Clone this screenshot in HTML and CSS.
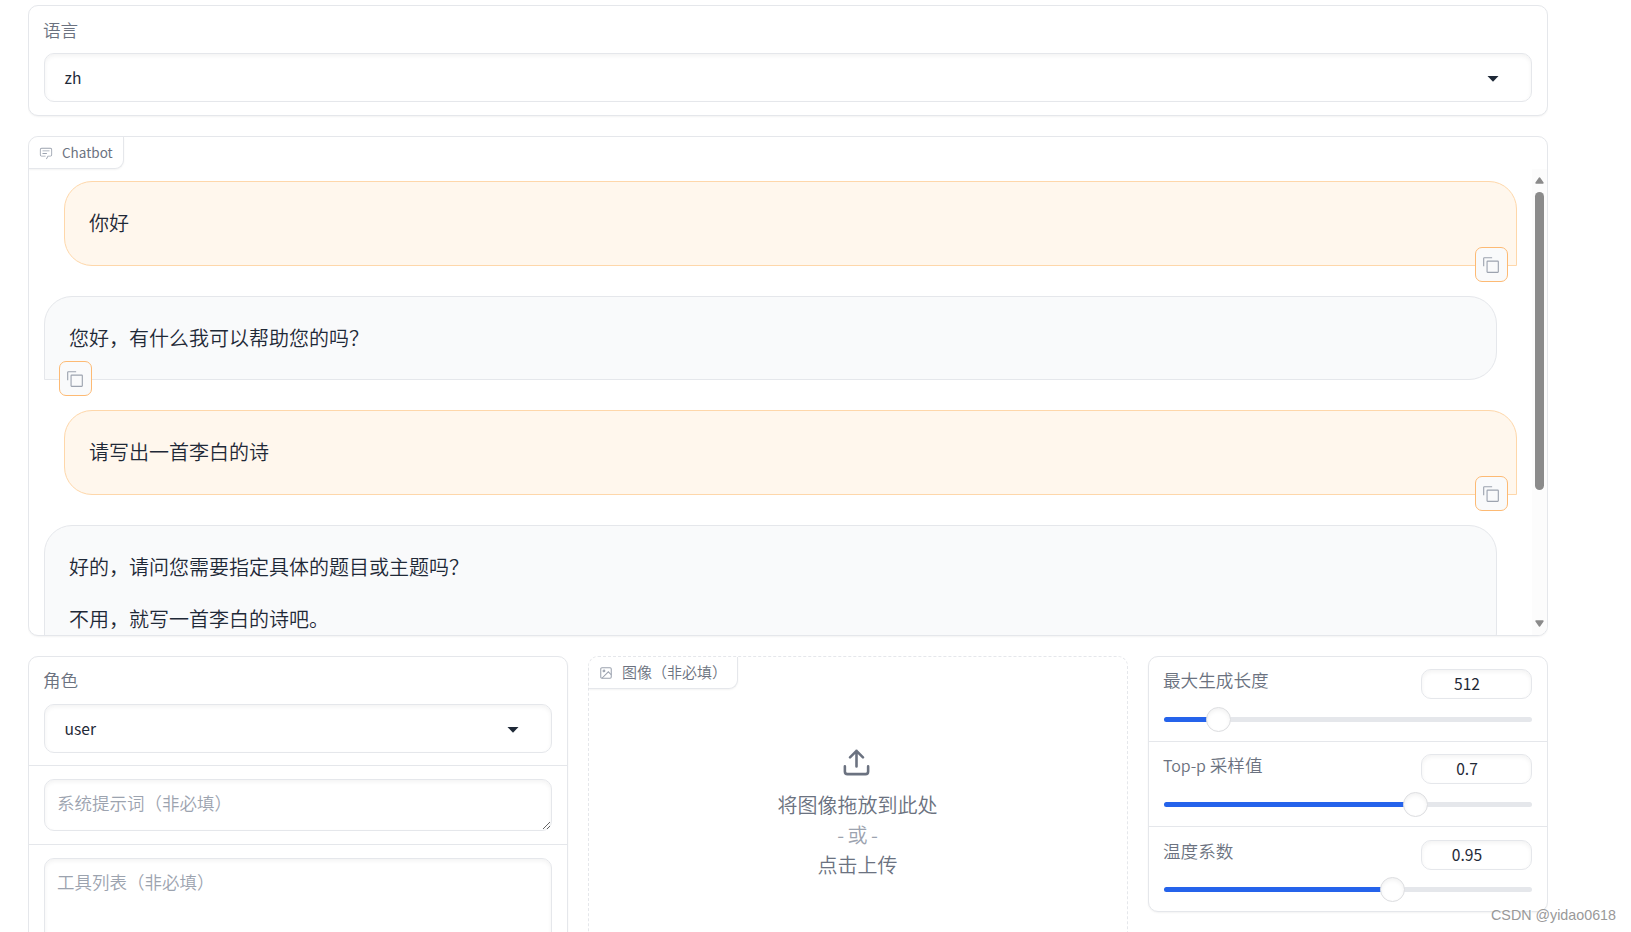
FILE: index.html
```html
<!DOCTYPE html>
<html lang="zh-CN">
<head>
    <meta charset="UTF-8">
    <meta name="viewport" content="width=device-width, initial-scale=1.0">
    <title>Chatbot</title>
    <link rel="stylesheet" href="styles.css">
</head>
<body>
    <div class="container">
        <div class="block lang-block">
            <label class="block-title">语言</label>
            <div class="dropdown">
                <span>zh</span>
                <svg class="arrow" viewBox="0 0 18 18"><path d="M3.5 7h11L9 12.8z"/></svg>
            </div>
        </div>

        <div class="block chatbot">
            <div class="block-label">
                <svg class="label-icon" viewBox="0 0 32 32"><path d="M17.74 30L16 29l4-7h6a2 2 0 0 0 2-2V8a2 2 0 0 0-2-2H6a2 2 0 0 0-2 2v12a2 2 0 0 0 2 2h9v2H6a4 4 0 0 1-4-4V8a4 4 0 0 1 4-4h20a4 4 0 0 1 4 4v12a4 4 0 0 1-4 4h-4.84z"/><path d="M8 10h16v2H8zm0 6h10v2H8z"/></svg>
                <span>Chatbot</span>
            </div>
            <div class="messages">
                <div class="message user">
                    <p>你好</p>
                    <button class="copy"><svg viewBox="0 0 32 32"><path d="M28 10v18H10V10h18m0-2H10a2 2 0 0 0-2 2v18a2 2 0 0 0 2 2h18a2 2 0 0 0 2-2V10a2 2 0 0 0-2-2z"/><path d="M4 18H2V4a2 2 0 0 1 2-2h14v2H4z"/></svg></button>
                </div>
                <div class="message bot">
                    <p>您好，有什么我可以帮助您的吗？</p>
                    <button class="copy"><svg viewBox="0 0 32 32"><path d="M28 10v18H10V10h18m0-2H10a2 2 0 0 0-2 2v18a2 2 0 0 0 2 2h18a2 2 0 0 0 2-2V10a2 2 0 0 0-2-2z"/><path d="M4 18H2V4a2 2 0 0 1 2-2h14v2H4z"/></svg></button>
                </div>
                <div class="message user">
                    <p>请写出一首李白的诗</p>
                    <button class="copy"><svg viewBox="0 0 32 32"><path d="M28 10v18H10V10h18m0-2H10a2 2 0 0 0-2 2v18a2 2 0 0 0 2 2h18a2 2 0 0 0 2-2V10a2 2 0 0 0-2-2z"/><path d="M4 18H2V4a2 2 0 0 1 2-2h14v2H4z"/></svg></button>
                </div>
                <div class="message bot">
                    <p>好的，请问您需要指定具体的题目或主题吗？</p>
                    <p>不用，就写一首李白的诗吧。</p>
                </div>
            </div>
            <div class="scrollbar">
                <svg class="scroll-btn" viewBox="0 0 9 7"><path d="M4.5 1L8 6H1z"/></svg>
                <div class="scroll-thumb"></div>
                <svg class="scroll-btn down" viewBox="0 0 9 7"><path d="M4.5 6L8 1H1z"/></svg>
            </div>
        </div>

        <div class="row">
            <div class="block form">
                <div class="field role">
                    <label class="block-title">角色</label>
                    <div class="dropdown">
                        <span>user</span>
                        <svg class="arrow" viewBox="0 0 18 18"><path d="M3.5 7h11L9 12.8z"/></svg>
                    </div>
                </div>
                <div class="field">
                    <textarea class="system" placeholder="系统提示词（非必填）"></textarea>
                </div>
                <div class="field">
                    <textarea class="tools" placeholder="工具列表（非必填）"></textarea>
                </div>
            </div>

            <div class="block image">
                <div class="block-label">
                    <svg class="label-icon stroke" viewBox="0 0 24 24"><rect x="3" y="3" width="18" height="18" rx="2"/><circle cx="8.5" cy="8.5" r="1.5"/><path d="M21 15l-5-5L5 21"/></svg>
                    <span>图像（非必填）</span>
                </div>
                <div class="upload">
                    <svg class="upload-icon" viewBox="0 0 24 24"><path d="M21 15v4a2 2 0 0 1-2 2H5a2 2 0 0 1-2-2v-4"/><path d="M17 8l-5-5-5 5M12 3v12"/></svg>
                    <span>将图像拖放到此处</span>
                    <span class="or">- 或 -</span>
                    <span>点击上传</span>
                </div>
            </div>

            <div class="block sliders">
                <div class="slider">
                    <div class="slider-head">
                        <label class="block-title">最大生成长度</label>
                        <div class="number">512</div>
                    </div>
                    <div class="track"><div class="fill" style="width: 54.5px"></div><div class="thumb"></div></div>
                </div>
                <div class="slider">
                    <div class="slider-head">
                        <label class="block-title"><span class="latin">Top-p</span> 采样值</label>
                        <div class="number">0.7</div>
                    </div>
                    <div class="track"><div class="fill" style="width: 251.5px"></div><div class="thumb"></div></div>
                </div>
                <div class="slider">
                    <div class="slider-head">
                        <label class="block-title">温度系数</label>
                        <div class="number">0.95</div>
                    </div>
                    <div class="track"><div class="fill" style="width: 228.5px"></div><div class="thumb"></div></div>
                </div>
            </div>
        </div>
    </div>
    <div class="watermark">CSDN @yidao0618</div>
</body>
</html>
```
FILE: styles.css
```css
* {
    box-sizing: border-box;
}

body {
    margin: 0;
    height: 932px;
    overflow: hidden;
    position: relative;
    background: white;
    color: #1f2937;
    font-family: "Noto Sans CJK SC", sans-serif;
    font-weight: 350;
}

.container {
    width: 1520px;
    height: 932px;
    overflow: hidden;
    margin-left: 28px;
    padding-top: 5px;
    display: flex;
    flex-direction: column;
    gap: 20px;
}

.block {
    position: relative;
    flex-shrink: 0;
    border: 1px solid #e5e7eb;
    border-radius: 10px;
    background: white;
    box-shadow: 0 1px 2px 0 rgba(0, 0, 0, 0.05);
}

.block-title {
    display: block;
    margin-left: -1px;
    color: #6b7280;
    font-size: 17.6px;
    line-height: 26px;
}

.lang-block {
    height: 111px;
    padding: 11px 15px;
}

.lang-block .dropdown {
    margin-top: 10px;
}

.dropdown {
    display: flex;
    align-items: center;
    justify-content: space-between;
    height: 49px;
    padding: 0 29px 0 19.5px;
    border: 1px solid #e5e7eb;
    border-radius: 10px;
    box-shadow: inset 0 2px 4px 0 rgba(0, 0, 0, 0.05);
    font-size: 15.6px;
    font-weight: 400;
}

.dropdown span {
    margin-top: -2px;
}

.arrow {
    width: 18px;
    height: 18px;
    fill: #1f2937;
}

/* Chatbot */
.chatbot {
    height: 500px;
    overflow: hidden;
}

.block-label {
    position: absolute;
    top: 0;
    left: 0;
    z-index: 2;
    display: flex;
    align-items: center;
    height: 32px;
    padding: 0 10px;
    border-right: 1px solid #e5e7eb;
    border-bottom: 1px solid #e5e7eb;
    border-radius: 9px 0 9px 0;
    background: white;
    box-shadow: 0 1px 2px 0 rgba(0, 0, 0, 0.05);
    color: #6b7280;
    font-size: 15px;
}

.block-label span {
    margin-top: -2px;
}

.chatbot .block-label {
    padding-right: 10.5px;
    font-size: 13.5px;
    font-weight: 400;
}

.label-icon {
    width: 14px;
    height: 14px;
    margin-right: 9px;
    fill: #9ca3af;
}

.stroke {
    fill: none;
    stroke: #9ca3af;
    stroke-width: 1.8;
}

.messages {
    display: flex;
    flex-direction: column;
    gap: 30px;
    padding: 44px 30px 0 15px;
}

.message {
    position: relative;
    width: 1453px;
    min-height: 84.5px;
    padding: 25px 24px;
    border: 1px solid #e5e7eb;
    border-radius: 28px;
    font-size: 20px;
    line-height: 32px;
}

.message p {
    margin: 0 0 20px;
}

.message p:last-of-type {
    margin-bottom: 0;
}

.user {
    align-self: flex-end;
    border-color: #fed7aa;
    border-bottom-right-radius: 0;
    background: #fff7ed;
}

.bot {
    border-bottom-left-radius: 0;
    background: #f9fafb;
}

.copy {
    position: absolute;
    bottom: -17px;
    display: flex;
    align-items: center;
    justify-content: center;
    width: 33px;
    height: 35px;
    padding: 1px 1px 0 0;
    border: 1px solid #fdba74;
    border-radius: 7px;
    background: #f9fafb;
}

.copy svg {
    width: 18px;
    height: 18px;
    fill: #9ca3af;
}

.user .copy {
    right: 8px;
}

.bot .copy {
    left: 14px;
}

.scrollbar {
    position: absolute;
    top: 32px;
    right: 0;
    bottom: 0;
    display: flex;
    flex-direction: column;
    align-items: center;
    width: 15px;
    padding: 8px 0;
    background: #fcfcfc;
}

.scroll-btn {
    width: 9px;
    height: 7px;
    fill: #8b8b8b;
    stroke: #8b8b8b;
    stroke-width: 1.4;
    stroke-linejoin: round;
}

.scroll-thumb {
    width: 9px;
    height: 298px;
    margin-top: 8px;
    border-radius: 5px;
    background: #8b8b8b;
}

.down {
    margin-top: auto;
}

/* Bottom row */
.row {
    display: flex;
    align-items: flex-start;
    gap: 20px;
}

.form,
.image {
    width: 540px;
    height: 330px;
}

.field {
    padding: 13px 15px;
    border-bottom: 1px solid #e5e7eb;
}

.role {
    padding: 10px 15px 12px;
}

.role .dropdown {
    margin-top: 11px;
}

.field textarea {
    display: block;
    width: 100%;
    height: 52px;
    padding: 10px 12px;
    border: 1px solid #e5e7eb;
    border-radius: 10px;
    box-shadow: inset 0 2px 4px 0 rgba(0, 0, 0, 0.05);
    font-family: inherit;
    font-weight: 350;
    font-size: 17.5px;
    line-height: 26px;
}

.field textarea.tools {
    height: 130px;
}

.field textarea::placeholder {
    color: #9ca3af;
}

.image {
    border-style: dashed;
    box-shadow: none;
}

.upload {
    display: flex;
    flex-direction: column;
    align-items: center;
    padding: 90px 1px 0 0;
    color: #6b7280;
    font-size: 20px;
    line-height: 30px;
}

.upload-icon {
    width: 31px;
    height: 31px;
    margin: 0 3px 12px 0;
    fill: none;
    stroke: currentColor;
    stroke-width: 2;
    stroke-linecap: round;
    stroke-linejoin: round;
}

.or {
    color: #9ca3af;
    word-spacing: -1px;
}

.sliders {
    width: 400px;
    height: 256px;
}

.slider {
    height: 85px;
    padding: 12px 15px 0;
    border-bottom: 1px solid #e5e7eb;
}

.slider:last-child {
    padding-top: 13px;
    border-bottom: none;
}

.slider:last-child .track {
    margin-top: 17px;
}

.slider-head {
    display: flex;
    justify-content: space-between;
    height: 30px;
}

.slider-head .block-title {
    margin-top: -2px;
}

.latin {
    font-size: 16px;
    letter-spacing: -0.1px;
}

.number {
    width: 111px;
    height: 30px;
    padding-right: 19px;
    border: 1px solid #e5e7eb;
    border-radius: 10px;
    box-shadow: inset 0 2px 4px 0 rgba(0, 0, 0, 0.05);
    font-size: 15.6px;
    font-weight: 400;
    line-height: 27px;
    text-align: center;
}

.track {
    display: flex;
    align-items: center;
    height: 5px;
    margin-top: 18px;
    border-radius: 3px;
    background: #e5e7eb;
}

.fill {
    height: 5px;
    border-radius: 3px;
    background: #2563eb;
}

.thumb {
    flex: none;
    width: 25px;
    height: 25px;
    margin-left: -12.5px;
    border: 1px solid #dcdde0;
    border-radius: 50%;
    background: white;
    box-shadow: inset 0 2px 4px 0 rgba(0, 0, 0, 0.06);
}

.watermark {
    position: absolute;
    right: 15px;
    bottom: 8px;
    color: #999;
    font: 14.3px/18px "Liberation Sans", Arial, sans-serif;
    text-shadow: 1px 1px 0 rgba(255, 255, 255, 0.8);
}
```
